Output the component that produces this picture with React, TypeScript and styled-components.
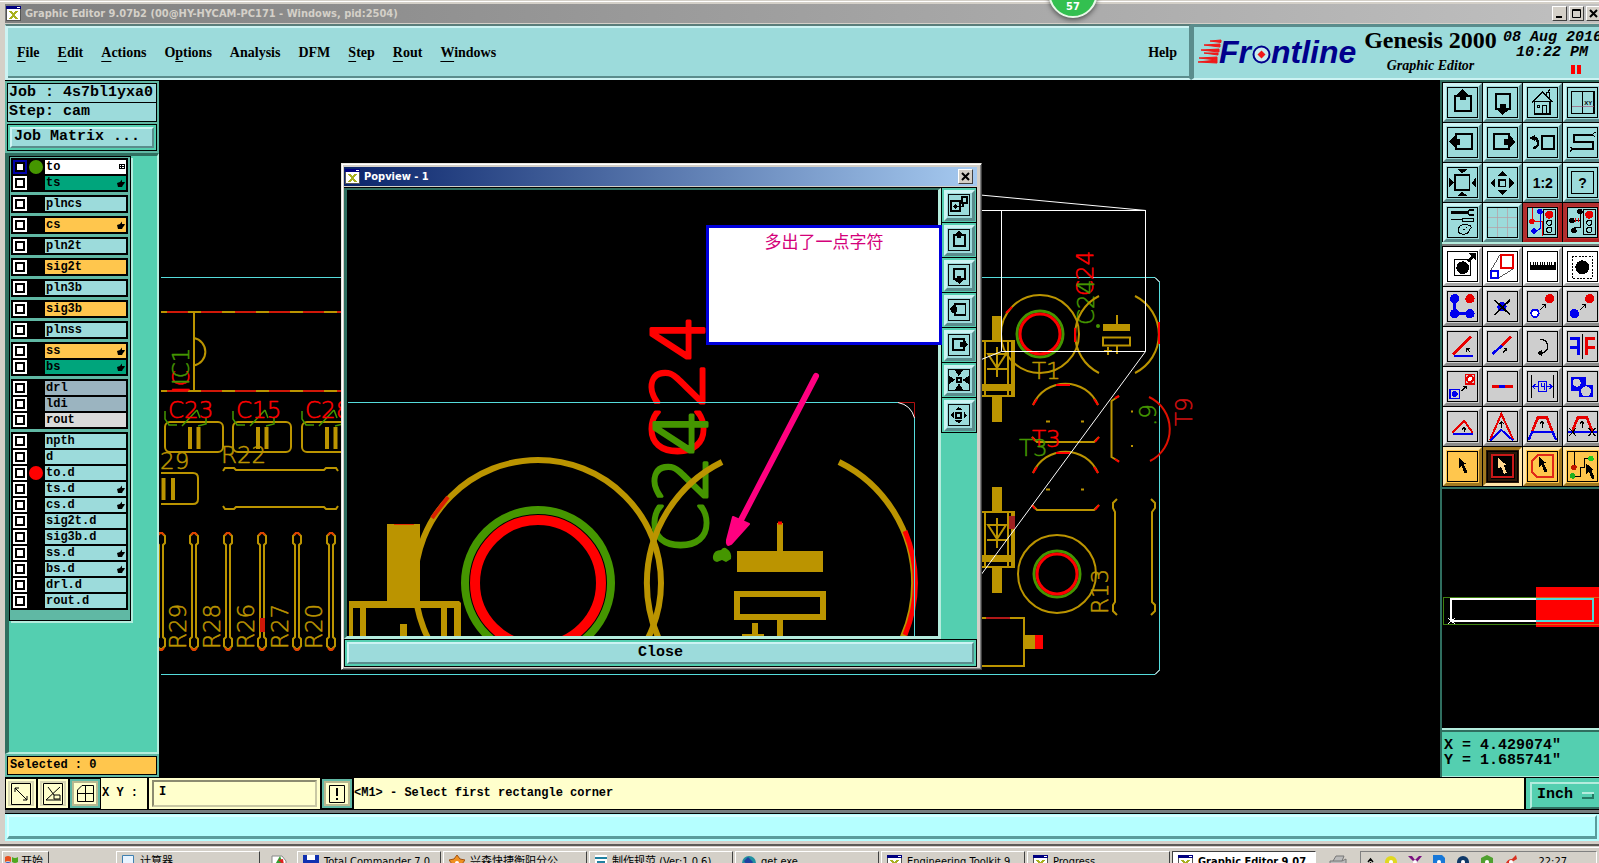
import React from 'react';
import styled, { createGlobalStyle, css } from 'styled-components';

const MONO = '"Liberation Mono", "Noto Sans CJK SC", monospace';
const SERIF = '"Liberation Serif", serif';
const SANS = '"DejaVu Sans Condensed", "Noto Sans CJK SC", sans-serif';

const C = {
  aqua: '#9cdbdb',
  aquaLight: '#cdf3f3',
  aquaDark: '#5a8c8c',
  teal: '#54cfb0',
  tealLight: '#b4ecdd',
  tealMid: '#60b8a4',
  tealDark: '#2f6e5f',
  chrome: '#d4d0c8',
  cream: '#ffffcc',
  amber: '#ffc64d',
  gold: '#bb9400',
  green: '#459600',
  red: '#ff0000',
  outline: '#55dcdc',
};

const GlobalStyle = createGlobalStyle`
  html, body { margin: 0; height: 100%; overflow: hidden; background: ${C.chrome}; }
  * { box-sizing: border-box; }
  button, input, select { font: inherit; color: inherit; margin: 0; padding: 0; border-radius: 0; }
  svg { display: block; }
`;

const Desktop = styled.div`
  position: relative;
  display: flex;
  flex-direction: column;
  height: 100vh;
  overflow: hidden;
  background: ${C.chrome};
  color: #000;
`;

const AppWindow = styled.div`
  display: flex;
  flex-direction: column;
  flex: none;
  padding: 4px 0 3px 5px;
  border-bottom: 2px solid #5c5a56;
  background: linear-gradient(#d4d0c8 0 1px, #fff 1px 2px, #d4d0c8 2px);
`;

const TitleBar = styled.header<{ $active?: boolean }>`
  display: flex;
  align-items: center;
  gap: 4px;
  flex: none;
  height: 20px;
  padding-left: 1px;
  border-bottom: 1px solid ${C.chrome};
  background: ${p => (p.$active ? 'linear-gradient(90deg, #0a246a, #a6caf0)' : 'linear-gradient(90deg, #808080, #c0c0c0)')};
  color: ${p => (p.$active ? '#fff' : '#d4d0c8')};
  font: bold 11px/18px ${SANS};
`;

const Title = styled.h1`
  flex: 1;
  margin: 0;
  font: inherit;
  white-space: nowrap;
`;

const Captions = styled.div`
  display: flex;
  gap: 2px;
  margin-right: -2px;
  margin-left: auto;
`;

const CaptionButton = styled.button`
  display: grid;
  place-items: center;
  width: 15px;
  height: 15px;
  border: 1px solid;
  border-color: #fff #404040 #404040 #fff;
  background: ${C.chrome};
`;

const Badge = styled.div`
  position: absolute;
  top: -31px;
  left: 67.1%;
  width: 49px;
  height: 49px;
  padding-top: 30px;
  transform: translateX(-50%);
  border: 2px solid #e8f8e8;
  border-radius: 50%;
  background: #33c050;
  box-shadow: 0 2px 5px rgba(0, 0, 0, 0.5);
  color: #fff;
  font: bold 11px/12px ${SANS};
  text-align: center;
`;

const TopRow = styled.div`
  display: flex;
  flex: none;
  height: 56px;
`;

const MenuBar = styled.nav`
  display: flex;
  align-items: center;
  gap: 18px;
  flex: 1;
  padding: 2px 12px 0 11px;
  border: solid;
  border-width: 2px 2px 2px 1px;
  border-color: #5a7d7a ${C.aquaDark} ${C.aquaLight} ${C.aquaLight};
  background: ${C.aqua};
  box-shadow: inset 2px 2px ${C.aquaLight}, inset 0 -2px ${C.aquaDark};
`;

const MenuItem = styled.button`
  border: 0;
  background: none;
  font: bold 14px/20px ${SERIF};
  u { text-underline-offset: 4px; text-decoration-thickness: 1px; }
  &:last-child { margin-left: auto; }
`;

const BrandPanel = styled.div`
  display: flex;
  gap: 5px;
  flex: 0 0 408px;
  overflow: hidden;
  padding-left: 3px;
  border: solid;
  border-width: 3px 0 2px 3px;
  border-color: ${C.aquaDark} ${C.aquaDark} ${C.aquaLight} ${C.aquaDark};
  background: ${C.aqua};
`;

const Product = styled.div`
  flex: none;
  width: 135px;
  text-align: center;
  font: bold 24px/27px ${SERIF};
  white-space: nowrap;
  em { display: block; font: italic bold 14px/24px ${SERIF}; }
`;

const Clock = styled.div`
  flex: none;
  width: 100px;
  padding-top: 3px;
  font: italic bold 15px/15px ${MONO};
  white-space: nowrap;
  span { display: block; padding-left: 13px; }
`;

const PauseMark = styled.i`
  display: block;
  width: 10px;
  height: 9px;
  margin: 5px 0 0 68px;
  background: linear-gradient(90deg, red 0 4px, transparent 4px 6px, red 6px);
`;

const Workspace = styled.main`
  position: relative;
  display: flex;
  flex: none;
  min-height: 697px;
  background: #000;
`;

const SidePanel = styled.aside`
  display: flex;
  flex-direction: column;
  flex: 0 0 154px;
  background: ${C.tealMid};
`;

const JobInfo = styled.section`
  padding: 2px 2px 2px;
  border-top: 1px solid #000;
  font: bold 15px/17px ${MONO};
  white-space: pre;
`;

const JobLine = styled.div`
  overflow: hidden;
  margin-bottom: -1px;
  padding: 0 1px;
  border: 1px solid #000;
  background: ${C.aqua};
  line-height: 18px;
`;

const MatrixFrame = styled.div`
  margin-top: 3px;
  padding: 2px;
  border: 1px solid #000;
  background: ${C.teal};
`;

const MatrixButton = styled.button`
  display: block;
  width: 100%;
  padding: 0 2px 1px;
  border: 2px solid;
  border-color: ${C.aquaLight} ${C.aquaDark} ${C.aquaDark} ${C.aquaLight};
  background: ${C.aqua};
  line-height: 16px;
  text-align: left;
`;

const LayerWell = styled.section`
  display: flex;
  flex: 1;
  align-items: flex-start;
  border: solid;
  border-width: 3px 2px 2px 4px;
  border-color: ${C.tealDark} ${C.tealLight} ${C.tealLight} ${C.tealDark};
  background: ${C.teal};
`;

const LayerList = styled.div`
  display: flex;
  flex-direction: column;
  gap: 3px;
  flex: none;
  width: 122px;
  padding: 1px 2px 10px 1px;
  border: 1px solid #000;
  background: ${C.tealMid};
  box-shadow: 2px 2px ${C.tealLight};
`;

const LayerGroup = styled.div`
  display: flex;
  flex-direction: column;
  gap: 2px;
  padding: 2px;
  background: #000;
`;

const LayerRow = styled.div`
  display: grid;
  grid-template-columns: 14px 18px 1fr;
  height: 14px;
`;

const LayerCheck = styled.input<{ $active?: boolean }>`
  appearance: none;
  width: 14px;
  height: 14px;
  border: 2px solid ${p => (p.$active ? '#0000a8' : '#fff')};
  background: #fff;
  box-shadow: inset 0 0 0 2px #000;
`;

const LayerDot = styled.span<{ $color?: string }>`
  width: 14px;
  height: 14px;
  margin-left: 2px;
  border-radius: 50%;
  background: ${p => p.$color ?? 'transparent'};
`;

const LayerName = styled.label<{ $bg: string }>`
  display: flex;
  align-items: center;
  justify-content: space-between;
  overflow: hidden;
  padding: 0 1px;
  background: ${p => p.$bg};
  font: bold 12px/14px ${MONO};
`;

const Selected = styled.div`
  margin: 2px;
  padding: 0 2px;
  border: 1px solid #000;
  background: ${C.amber};
  font: bold 12px/17px ${MONO};
`;

const BoardView = styled.section`
  flex: 1;
  min-width: 0;
  overflow: hidden;
`;

const ToolPanel = styled.aside`
  display: flex;
  flex-direction: column;
  flex: 0 0 159px;
  overflow: hidden;
  border-left: 2px solid ${C.tealDark};
`;

const ToolGrid = styled.div<{ $lower?: boolean }>`
  display: grid;
  grid-template-columns: repeat(4, 39px);
  gap: 1px;
  padding: ${p => (p.$lower ? '1px 1px 1px' : '1px 1px 0')};
  border-top: 2px solid ${p => (p.$lower ? '#777' : C.tealDark)};
  border-bottom: 2px solid ${p => (p.$lower ? C.tealDark : C.tealLight)};
  background: #000;
`;

type Tone = 'aqua' | 'red' | 'white' | 'gray' | 'amber' | 'amberOn';
const tones: Record<Tone, [string, string, string]> = {
  aqua: [C.aqua, C.aquaLight, C.aquaDark],
  red: [C.aqua, '#b03030', '#b02020'],
  white: ['#fff', '#fff', '#a8a8a8'],
  gray: ['#cecece', '#efefef', '#8a8a8a'],
  amber: [C.amber, '#ffe6a8', '#a07820'],
  amberOn: ['#2a1808', '#a07820', '#ffe6a8'],
};

const raised = css<{ $tone: Tone }>`
  border: 3px solid;
  border-color: ${p => tones[p.$tone][1]} ${p => tones[p.$tone][2]} ${p => tones[p.$tone][2]} ${p => tones[p.$tone][1]};
  background: ${p => tones[p.$tone][0]};
`;

const ToolButton = styled.button<{ $tone: Tone }>`
  display: grid;
  place-items: center;
  width: 39px;
  height: 39px;
  ${raised}
  ${p => p.$tone === 'red' && css`box-shadow: inset 0 0 0 1px #c03030;`}
`;

const MiniMap = styled.div`
  flex: 1;
  overflow: hidden;
  border-bottom: 2px solid ${C.tealLight};
`;

const Coordinates = styled.output`
  display: block;
  flex: none;
  padding: 6px 2px 8px;
  border-top: 2px solid ${C.tealDark};
  border-bottom: 1px solid ${C.tealLight};
  background: ${C.teal};
  font: bold 15px/15px ${MONO};
  white-space: pre;
`;

const Popup = styled.section`
  position: absolute;
  top: 83px;
  left: 336px;
  width: 641px;
  display: flex;
  flex-direction: column;
  padding: 3px 4px 2px 2px;
  border: 1px solid;
  border-color: #e8e6e0 #404040 #404040 #e8e6e0;
  background: ${C.chrome};
  box-shadow: inset 1px 1px #fff, inset -1px -1px #808080;
`;

const PopupBody = styled.div`
  display: flex;
  border-top: 1px solid #000;
  background: #000;
`;

const PopupView = styled.div`
  flex: 1;
  min-width: 0;
  overflow: hidden;
  border: solid;
  border-width: 2px 3px 3px 3px;
  border-color: ${C.tealDark} ${C.tealLight} ${C.tealLight} ${C.tealDark};
`;

const PopupTools = styled.div`
  display: flex;
  flex-direction: column;
  flex: 0 0 36px;
  gap: 1px;
  padding: 0 1px;
  background: linear-gradient(#000 0 245px, ${C.teal} 245px);
`;

const PopupToolCell = styled.div`
  display: grid;
  place-items: center;
  height: 34px;
  background: ${C.teal};
`;

const PopupTool = styled.button<{ $tone: Tone }>`
  display: grid;
  place-items: center;
  width: 31px;
  height: 31px;
  ${raised}
  svg g [fill='none'] { stroke-width: 8px; }
`;

const CloseFrame = styled.div`
  padding: 2px;
  border: 1px solid #000;
  background: ${C.teal};
`;

const CloseButton = styled.button`
  display: block;
  width: 100%;
  border: 2px solid;
  border-color: ${C.aquaLight} ${C.aquaDark} ${C.aquaDark} ${C.aquaLight};
  background: ${C.aqua};
  font: bold 15px/18px ${MONO};
`;

const Note = styled.div`
  position: absolute;
  top: 61px;
  left: 364px;
  width: 236px;
  height: 120px;
  padding-top: 3px;
  border: 3px solid #0000dc;
  background: #fff;
  color: #d4007a;
  font: 17px/20px "Noto Sans CJK SC", sans-serif;
  text-align: center;
`;

const PromptRow = styled.div`
  display: flex;
  flex: none;
  height: 33px;
  border-top: 1px solid #000;
  border-bottom: 1px solid #000;
  background: ${C.cream};
  font: bold 12px/30px ${MONO};
`;

const SnapButton = styled.button<{ $on?: boolean }>`
  display: grid;
  place-items: center;
  flex: none;
  width: 32px;
  border: 3px solid ${p => (p.$on ? C.tealMid : C.cream)};
  outline: 1px solid #000;
  outline-offset: -1px;
  background: ${C.cream};
  box-shadow: inset 0 0 0 2px ${p => (p.$on ? '#b9b890' : '#d8d7b4')};
`;

const XyLabel = styled.label`
  flex: none;
  width: 46px;
  padding-left: 1px;
  white-space: pre;
`;

const XyField = styled.div`
  display: flex;
  flex: none;
  width: 174px;
  padding: 2px 3px;
  border: solid #000;
  border-width: 0 1px 0 2px;
`;

const XyInput = styled.input`
  flex: 1;
  min-width: 0;
  padding: 0 5px 4px;
  border: 2px solid;
  border-color: #8c8b70 #c9c8a4 #c9c8a4 #8c8b70;
  background: ${C.cream};
`;

const Prompt = styled.div`
  flex: 1;
  border-left: 1px solid #000;
  white-space: nowrap;
`;

const UnitFrame = styled.div`
  flex: 0 0 75px;
  overflow: hidden;
  padding: 2px 0 2px 4px;
  border-left: 2px solid #000;
  background: ${C.teal};
`;

const UnitSelect = styled.select`
  appearance: none;
  width: 72px;
  height: 27px;
  padding-left: 5px;
  border: 2px solid;
  border-color: ${C.tealLight} ${C.tealDark} ${C.tealDark} ${C.tealLight};
  background: linear-gradient(#267a64, #267a64) 50px 13px / 12px 2px no-repeat,
    linear-gradient(${C.tealLight}, ${C.tealLight}) 50px 8px / 12px 2px no-repeat,
    linear-gradient(#267a64, #267a64) 60px 8px / 2px 7px no-repeat,
    ${C.teal};
  font: bold 15px/22px ${MONO};
`;

const StatusLine = styled.div`
  flex: none;
  height: 31px;
  padding: 2px;
  border-top: 3px solid #777f80;
  background: #b5ffff;
  box-shadow: inset 0 1px #000;
  div {
    height: 24px;
    border: solid;
    border-width: 2px 2px 3px;
    border-color: #d8ffff #5a9c9c #5a9c9c #d8ffff;
  }
`;

const Taskbar = styled.footer`
  display: flex;
  flex: none;
  gap: 2px;
  height: 30px;
  padding: 5px 2px 0;
  background: linear-gradient(${C.chrome} 0 1px, #fff 1px 2px, ${C.chrome} 2px);
  font: 11px/20px ${SANS};
`;

const Task = styled.button<{ $w: number; $on?: boolean }>`
  display: flex;
  align-items: center;
  gap: 5px;
  flex: 0 0 ${p => p.$w}px;
  overflow: hidden;
  height: 22px;
  padding: 0 5px;
  border: 1px solid;
  border-color: ${p => (p.$on ? '#404040 #fff #fff #404040' : '#fff #404040 #404040 #fff')};
  background: ${p => (p.$on ? '#fff' : C.chrome)};
  font-weight: ${p => (p.$on ? 'bold' : 'normal')};
  white-space: nowrap;
  svg { flex: none; }
`;

const StartButton = styled(Task)`
  gap: 2px;
  padding: 0 2px;
`;

const TaskGap = styled.span<{ $w: number }>`
  display: grid;
  place-items: center;
  flex: 0 0 ${p => p.$w}px;
  height: 22px;
`;

const Tray = styled.div`
  display: flex;
  align-items: center;
  gap: 10px;
  flex: 1;
  height: 22px;
  padding: 0 29px 0 6px;
  border: 1px solid;
  border-color: #808080 #fff #fff #808080;
  time { margin-left: auto; }
`;

/* ---------- icons ---------- */

const XWindowIcon = ({ size = 15 }: { size?: number }) => (
  <svg width={size} height={size} viewBox="0 0 15 15" shapeRendering="crispEdges">
    <rect width="15" height="15" fill="#fff" />
    <rect width="15" height="3" fill="#000080" />
    <rect x="11" y="1" width="3" height="1" fill="#fff" />
    <path d="M4 5l7 8M11 5l-7 8" stroke="#a8b020" strokeWidth="2" />
    <path d="M0 3V14.5H14.5V3" stroke="#555" fill="none" />
  </svg>
);

const Hand = () => (
  <svg width="8" height="8" viewBox="0 0 8 8"><path d="M0 4l3-1 2-2.500v2.500h3L7 5 6 6 5 8H1z" /></svg>
);
const GridMark = () => (
  <svg width="6" height="6" viewBox="0 0 6 6" shapeRendering="crispEdges"><path d="M0 .5h6M0 2.5h6M0 4.5h6M.5 0v5M2.5 0v5M5.5 0v5" stroke="#000" /></svg>
);

const k = '#000', b = '#0000ee', r = '#e80000';
const box = (x: number, y: number, w: number, h: number, s = 5, c = k) => (
  <rect x={x} y={y} width={w} height={h} fill="none" stroke={c} strokeWidth={s} />
);
const ln = (d: string, c = k, s = 3) => <path d={d} fill="none" stroke={c} strokeWidth={s} />;
const dot = (x: number, y: number, rad: number, c = k) => <circle cx={x} cy={y} r={rad} fill={c} />;
const smallArrow = (x: number, y: number) => ln(`M${x} ${y + 16}l16-16M${x + 6} ${y}h10v10`);
const pointer = (x: number, y: number, c = k) => (
  <path transform={`translate(${x} ${y})`} d="M0 0L24 20H16L26 44L18 48L9 26L0 32Z" fill={c} />
);
const glyph = (x: number, y: number, size: number, t: string) => (
  <text x={x} y={y} fontSize={size} fontWeight="bold" fontFamily="Liberation Sans, sans-serif">{t}</text>
);

const icons: Record<string, React.ReactNode> = {
  panUp: <>{box(24, 26, 46, 44, 6)}<path d="M46 6l17 15v7h-8v11H37V28h-8v-7z" /></>,
  panDown: <>{box(25, 20, 44, 44, 6)}<path d="M46 83l17-15v-7h-8V51H37v10h-8v7z" /></>,
  home: <>{ln('M14 45L46 14L76 45', k, 4)}{box(22, 43, 46, 37, 4)}{box(29, 53, 8, 8, 3)}{box(44, 54, 12, 25, 3)}{ln('M57 24V14h8V34M62 12l6-6')}</>,
  overview: <>{box(12, 13, 68, 66, 4)}{ln('M46 13V79')}{ln('M13 58H79', '#a05070', 2)}{glyph(51, 54, 18, 'XY')}</>,
  panLeft: <>{box(27, 20, 46, 46, 6)}<path d="M6 43l15-17h7v8h11v18H28v8h-7z" /></>,
  panRight: <>{box(19, 20, 46, 46, 6)}<path d="M84 43L69 26h-7v8H50v18h12v8h7z" /></>,
  previous: <>{box(44, 26, 35, 38, 6)}{ln('M14 32h10q8 4 8 16t-14 14', k, 7)}<path d="M7 32l16-10v20z" /></>,
  zigzag: <>{ln('M74 23H20V43H76V65H16', k, 6)}{ln('M84 14l-10 9 10 6M7 58l9 7-9 8')}</>,
  zoomIn: <>{box(23, 23, 44, 46)}<path d="M45 18L29 5h32zM45 73L29 87h32zM19 46L4 30v32zM73 46l14-16v32z" /></>,
  zoomOut: <>{box(34, 37, 21, 21)}<path d="M45 12l16 14H29zM45 82l16-14H29zM10 47l14-15v30zM80 47L66 32v30z" /></>,
  shrink: <>{box(36, 36, 18, 18)}<path d="M45 30L28 5h34zM45 60L28 86h34zM30 45L5 28v34zM60 45l26-17v34z" /></>,
  scale: glyph(16, 61, 42, '1:2'),
  help: <>{box(12, 13, 67, 65, 4)}{glyph(33, 61, 42, '?')}</>,
  setup: <>{ln('M10 15H60', k, 8)}{ln('M80 8H66l-6 7 6 7H80', k, 5)}{ln('M12 36H46', k, 3)}{box(46, 32, 32, 9, 3)}{ln('M34 62Q42 48 60 52T68 66Q60 84 44 80T34 62M46 66l6 2M56 60l4 2')}</>,
  grid: ln('M29 2V88M61 2V88M2 31H88M2 61H88', '#b89aa0', 2),
  netOn: <>{ln('M14 2V42H44V85', r)}{ln('M38 15V64l-16 12', b)}{dot(38, 13, 8, b)}{dot(14, 42, 8, r)}{dot(20, 71, 8, b)}{box(48, 6, 36, 76, 4)}{dot(66, 22, 12, r)}{ln('M58 46a8 8 0 1 0 16 0a8 8 0 1 0-16 0M58 68a8 8 0 1 0 16 0a8 8 0 1 0-16 0')}</>,
  netOff: <>{ln('M38 15V40H14M38 40V60H20')}{ln('M24 32v12M32 32v12', r)}{dot(38, 13, 8)}{dot(14, 40, 8)}{dot(20, 70, 8)}{box(48, 6, 36, 76, 4)}{dot(66, 22, 12, r)}{ln('M58 46a8 8 0 1 0 16 0a8 8 0 1 0-16 0M58 68a8 8 0 1 0 16 0a8 8 0 1 0-16 0')}</>,
  padSelect: <>{box(22, 25, 46, 46, 3)}{dot(46, 49, 19)}{ln('M62 30L76 16', k, 8)}<path d="M64 6h22v22z" /></>,
  padScale: <>{box(40, 12, 38, 38, 6, r)}{box(10, 60, 22, 20, 6, b)}{ln('M10 58L38 10M34 80L78 52', k, 2)}</>,
  ruler: <>{ln('M9 48H85', k, 17)}{ln('M10 33v10M17 33v10M24 33v10M31 33v10M38 33v10M45 33v10M52 33v10M59 33v10M66 33v10M73 33v10M80 33v10M84 33v10')}</>,
  selectArea: <>{dot(45, 48, 21)}<rect x="14" y="14" width="62" height="66" fill="none" stroke={k} strokeWidth="3" strokeDasharray="6 4" /></>,
  chain: <>{ln('M22 22V67H68', b, 10)}{dot(22, 22, 14, b)}{dot(68, 22, 14, r)}{dot(22, 67, 14, b)}{dot(68, 67, 14, b)}</>,
  delete: <>{dot(44, 46, 14, b)}{ln('M22 26L68 70M68 26L22 70', k, 5)}</>,
  copyPad: <>{dot(67, 22, 14, r)}<circle cx="23" cy="66" r="11" fill="#fff" stroke={b} strokeWidth="6" />{smallArrow(38, 40)}</>,
  movePad: <>{dot(67, 22, 14, r)}{dot(21, 67, 14, b)}{smallArrow(38, 40)}</>,
  angle: <>{ln('M16 70L70 16', r, 8)}{ln('M20 74H76', b, 7)}{ln('M58 50l10 12M58 62V50h10')}</>,
  lineSplit: <>{ln('M44 42L70 16', r, 8)}{ln('M16 68L44 42', b, 8)}{ln('M46 64l12-12M50 52h8v8')}</>,
  rotate: <>{ln('M38 24Q62 26 61 46T36 66', k, 4)}<path d="M30 65l14-10v20z" /></>,
  mirror: <>{ln('M45 8V82')}{ln('M8 22H34V72M8 48H34', b, 8)}{ln('M82 22H58V72M82 48H58', r, 8)}</>,
  copyLayer: <>{box(54, 9, 28, 28, 5, r)}<circle cx="68" cy="23" r="9" fill="#fff" stroke={r} strokeWidth="6" />{box(8, 54, 28, 28, 4, b)}{dot(22, 68, 9, b)}{smallArrow(42, 44)}</>,
  segment: <>{ln('M14 44H76', r, 9)}{ln('M36 44H54', b, 9)}</>,
  spacing: <>{ln('M12 12V80M78 12V80')}{ln('M16 46H34M56 46H74M24 38l-8 8 8 8M66 38l8 8-8 8M43 36v10h10M51 36v20', b)}{box(34, 30, 22, 30, 3, b)}</>,
  merge: <><path d="M12 18H56V40H78V78H36V60H12z" fill={b} />{dot(28, 34, 12, '#cecece')}{dot(56, 60, 15, '#cecece')}</>,
  triangle: <>{ln('M14 64L50 28L76 64', r, 6)}{ln('M18 68H76', b, 7)}{ln('M50 62V48M44 54l6-6 6 6')}</>,
  peak: <>{ln('M8 86L42 8L78 86', r, 6)}{ln('M8 88L42 56L78 88', b, 6)}{ln('M43 50V30M37 38l6-8 6 8')}</>,
  trapezoid: <>{ln('M14 62L32 18H58L76 62', r, 8)}{ln('M4 86L14 62H76L86 86', b, 7)}{ln('M44 50V30M38 38l6-8 6 8')}</>,
  trapezoidCut: <>{ln('M14 62L32 18H58L76 62', r, 8)}{ln('M2 62H88', b, 7)}{ln('M6 50l20 24M26 50L6 74M64 50l20 24M84 50L64 74')}{ln('M44 50V30M38 38l6-8 6 8')}</>,
  pick: pointer(34, 19),
  pickBox: <><rect x="10" y="8" width="72" height="74" fill="#000" />{box(14, 12, 64, 66, 6, '#c81818')}{pointer(32, 20, '#ffd890')}</>,
  pickPoly: <>{ln('M30 12H76V78H30L14 62V30Z', '#e02818', 6)}{pointer(34, 16)}</>,
  pickNet: <>{ln('M20 2V46M20 74H40V48H52V22H70')}{dot(20, 48, 8, '#c01800')}{dot(16, 74, 8, '#20b020')}{dot(71, 22, 8, '#20d020')}{pointer(56, 36)}</>,
  popout: <>{box(12, 30, 36, 42)}{box(60, 12, 18, 24, 4)}{ln('M26 52H62V36M34 44l-8 8 8 8')}</>,
};

const Icon = ({ name, size = 31 }: { name: string; size?: number }) => (
  <svg width={size} height={size} viewBox="-1 -1 93 93" shapeRendering="crispEdges" aria-hidden>
    <g>{icons[name]}</g>
    <rect x="0.5" y="0.5" width="90" height="90" fill="none" stroke="#000" strokeWidth={size > 25 ? 3 : 4} />
  </svg>
);

const upperTools: [string, Tone][] = [
  ['panUp', 'aqua'], ['panDown', 'aqua'], ['home', 'aqua'], ['overview', 'aqua'],
  ['panLeft', 'aqua'], ['panRight', 'aqua'], ['previous', 'aqua'], ['zigzag', 'aqua'],
  ['zoomIn', 'aqua'], ['zoomOut', 'aqua'], ['scale', 'aqua'], ['help', 'aqua'],
  ['setup', 'aqua'], ['grid', 'aqua'], ['netOn', 'red'], ['netOff', 'red'],
];
const lowerTools: [string, Tone][] = [
  ['padSelect', 'white'], ['padScale', 'white'], ['ruler', 'white'], ['selectArea', 'white'],
  ['chain', 'gray'], ['delete', 'gray'], ['copyPad', 'gray'], ['movePad', 'gray'],
  ['angle', 'gray'], ['lineSplit', 'gray'], ['rotate', 'gray'], ['mirror', 'gray'],
  ['copyLayer', 'gray'], ['segment', 'gray'], ['spacing', 'gray'], ['merge', 'gray'],
  ['triangle', 'gray'], ['peak', 'gray'], ['trapezoid', 'gray'], ['trapezoidCut', 'gray'],
  ['pick', 'amber'], ['pickBox', 'amberOn'], ['pickPoly', 'amber'], ['pickNet', 'amber'],
];
const popupTools = ['popout', 'panUp', 'panDown', 'panLeft', 'panRight', 'shrink', 'zoomOut'];

/* ---------- drawings ---------- */

const Label = ({ x, y, c, children, up, size = 23 }: { x: number; y: number; c: string; children: string; up?: boolean; size?: number }) => (
  <text
    transform={`translate(${x} ${y})${up ? ' rotate(-90)' : ''}`}
    fill={c}
    stroke={c}
    strokeWidth={size > 40 ? 3 : 0.5}
    strokeLinejoin="round"
    fontSize={size}
    fontWeight="200"
    fontFamily="DejaVu Sans Light, DejaVu Sans, sans-serif"
  >
    {children}
  </text>
);

const Hole = ({ x, y }: { x: number; y: number }) => (
  <g fill="none">
    <circle cx={x} cy={y} r="39" stroke={C.gold} strokeWidth="2" />
    <circle cx={x} cy={y} r="23" stroke={C.green} strokeWidth="3" />
    <circle cx={x} cy={y} r="20" stroke={C.red} strokeWidth="3" />
  </g>
);

const Diode = ({ y }: { y: number }) => (
  <g transform={`translate(0 ${y})`} stroke={C.gold} fill="none" strokeWidth="2">
    <path d="M997 0V24M997 80v26" strokeWidth="10" />
    <path d="M975 25H1014V80H975M985 25V80M1008 25V80M1012 25V80M988 38H1006L997 52ZM987 53H1007M997 31V61" />
    <path d="M975 71.500H1014" strokeWidth="7" />
  </g>
);

const Transistor = ({ y }: { y: number }) => (
  <g transform={`translate(0 ${y})`} fill="none" strokeWidth="2">
    <path d="M1033 21A35.400 35.400 0 0 1 1098 21M1032 53L1037 58H1094L1099 53M1046 37.500h4M1081 37.500h3" stroke={C.gold} />
    <path d="M1033 21l4-6M1098 21l-4-6M1056 1h14M1032 53l3 4M1099 53l-4 5" stroke={C.red} />
  </g>
);

const SmallCap = ({ x }: { x: number }) => (
  <g transform={`translate(${x} 0)`} stroke={C.gold} fill="none">
    <rect x="165" y="422" width="58" height="30" rx="5" strokeWidth="2" />
    <path d="M190 427V449M198.500 427V449" strokeWidth="4" />
    <path d="M165 411V419L169 425H177M182 426L197 410M197 410L200 418M198 426L206 424V418" stroke={C.green} strokeWidth="1.500" />
  </g>
);

const Resistor = ({ x }: { x: number }) => (
  <g transform={`translate(${x} 0)`} stroke={C.gold} fill="none" strokeWidth="2">
    <path d="M-2 547V635M2 547V635M-2 547V545L-4 543V536L-1 533H1L4 536V543L2 545V547M-2 635V637L-4 639V646L-1 649H1L4 646V639L2 637V635" />
    <path d="M-3 535L-1 533H1L3 535M-3 648L-1 650H1L3 648" stroke="#e04000" />
  </g>
);

const Board = () => (
  <svg width="1281" height="697" viewBox="159 80 1281 697">
    <g fill="none" strokeWidth="2" stroke={C.gold} shapeRendering="crispEdges">
      <path d="M161 312H345M161 391H345M194 312V391" />
      <path d="M167 312H345M167 391H345" stroke="#d01808" strokeDasharray="21 13" />
    </g>
    <path d="M194 338A14 14 0 0 1 194 365.500" fill="none" stroke={C.gold} strokeWidth="2" />
    <Label x={189} y={393} c={C.red} up>IC</Label>
    <Label x={189} y={385} c={C.green} up>IC1</Label>
    {[['C23', 0], ['C15', 68], ['C28', 137]].map(([t, x]) => (
      <g key={t}>
        <SmallCap x={Number(x)} />
        <Label x={168 + Number(x)} y={418} c={C.red}>{String(t)}</Label>
      </g>
    ))}
    <Label x={221} y={463} c={C.gold}>R22</Label>
    <Label x={160} y={469} c={C.gold}>29</Label>
    <g fill="none" stroke={C.gold} strokeWidth="2">
      <path d="M161 473H193Q198 473 198 478V499Q198 504 193 504H161" />
      <path d="M163.500 478V500M173 478V500" strokeWidth="4" />
      <path d="M223 471L225 468H234L236 470H324L326 468H336L338 471M223 506L225 509H234L236 507H324L326 509H336L338 506" />
    </g>
    {[161, 194, 228, 262, 297, 331].map(x => <Resistor key={x} x={x} />)}
    <rect x="260" y="618" width="5" height="14" fill="#d01808" />
    {['R29', 'R28', 'R26', 'R27', 'R20'].map((t, i) => <Label key={t} x={186 + i * 34} y={649} c={C.gold} up>{t}</Label>)}

    <path d="M161 277.500H1155L1159.500 282V670L1155 674.500H161" fill="none" stroke={C.outline} strokeWidth="1" />
    <path d="M1155 277.500l4.500 4.500M1159.500 670l-4.500 4.500" stroke="#fff" strokeWidth="1" />

    <Label x={1032} y={379} c={C.gold}>T1</Label>
    <Hole x={1040} y={334} />
    <path d="M1006 313l6-6" stroke={C.red} strokeWidth="2" />
    <Label x={1093} y={296} c={C.red} up>C24</Label>
    <Label x={1094} y={325} c={C.green} up>C24</Label>
    <g fill="none" stroke={C.gold} strokeWidth="2">
      <path d="M1099 296A43 43 0 0 0 1099 373M1135 296A43 43 0 0 1 1135 373" />
      <path d="M1103 337.500H1130V345.500H1103ZM1117 315V324M1117 346V354M1104 351h8M1108 347v8" />
      <path d="M1103 327.500H1130" strokeWidth="7" />
      <path d="M1075 328v14M1159 322v22" stroke={C.red} />
    </g>
    <circle cx="1098" cy="326" r="2" fill={C.green} />
    <Diode y={316} />
    <Diode y={487} />
    <rect x="1009" y="516" width="6" height="13" fill="#a02020" />
    <Transistor y={384} />
    <Transistor y={452} />
    <Label x={1032} y={447} c={C.red}>T3</Label>
    <Label x={1019} y={456} c={C.green}>T3</Label>
    <g fill="none" strokeWidth="2">
      <path d="M1119 396L1111.500 401V457L1119 461.500M1131 411.500h2M1131 446h2" stroke={C.gold} />
      <path d="M1149 397A35.400 35.400 0 0 1 1150 461" stroke="#e01000" />
      <path d="M1115 398l4-2M1115 459l4 3" stroke={C.red} />
      <path d="M1117 499L1113 503V508L1115 512V602L1113 605V611L1117 615M1151 499L1155 503V508L1152 512V602L1155 605V611L1151 615" stroke={C.gold} />
    </g>
    <Label x={1156} y={426} c={C.green} up>.9</Label>
    <Label x={1192} y={426} c="#d01010" up>T9</Label>
    <Hole x={1057} y={574} />
    <Label x={1108} y={614} c={C.gold} up>R13</Label>
    <path d="M975 618H1024V666H975" fill="none" stroke={C.gold} strokeWidth="2" />
    <path d="M986 618h24" stroke="#b01818" strokeWidth="2" />
    <rect x="1025" y="635" width="11" height="14" fill={C.gold} />
    <rect x="1035" y="635" width="8" height="14" fill={C.red} />
    <path d="M975 194.500L1146 210.500H975M1001.500 210V351.500H1145.500V210M1145.500 351.500L975 583M1001.500 351.500L975 362" fill="none" stroke="#fff" strokeWidth="1" />
  </svg>
);

const PopupDrawing = () => (
  <svg width="593" height="446" viewBox="347 190 593 446">
    <g fill="none" strokeWidth="6" stroke={C.gold}>
      <circle cx="538" cy="583" r="123" />
      <path d="M432 518L448 497" stroke="#d82000" strokeWidth="4" />
    </g>
    <Label x={704} y={459} c={C.red} up size={73}>C24</Label>
    <Label x={707} y={553} c={C.green} up size={73}>C24</Label>
    <g fill="none" strokeWidth="6" stroke={C.gold}>
      <path d="M722 462A135 135 0 0 0 722 704M839 462A135 135 0 0 1 839 704" />
      <path d="M905 531A135 135 0 0 1 905 635" stroke={C.red} strokeWidth="5" />
      <path d="M780 523V552M780 619V637M755 623V637" />
      <rect x="737" y="594" width="86" height="23" />
      <path d="M742 635H764" strokeWidth="2" />
    </g>
    <path d="M778 523h4" stroke={C.red} strokeWidth="3" />
    <rect x="737" y="551" width="86" height="21" fill={C.gold} />
    <circle cx="538" cy="583" r="73" fill="none" stroke={C.green} strokeWidth="8" />
    <circle cx="538" cy="583" r="63" fill="none" stroke={C.red} strokeWidth="10" />
    <rect x="387" y="524" width="33" height="80" fill={C.gold} />
    <path d="M349 601H459L461 603V637H454V608H447V637H441V608H366V637H360V608H353V637H349ZM400 624h7v13h-7z" fill={C.gold} />
    <path d="M394 524.500h20" stroke="#e03000" />
    <path d="M713 556Q714 550 721 550Q724 546 727 549Q732 552 731 559L726 562L722 560L717 562Q712 561 713 556Z" fill={C.green} />
    <path d="M348 402.500H898M914.500 418V637" stroke={C.outline} fill="none" />
    <path d="M898 402.500H914.500V418" stroke="#b01010" fill="none" />
    <path d="M898 402.500Q911 405 914.500 418" stroke="#fff" fill="none" />
    <path d="M816 376L741 520" stroke="#ff0080" strokeWidth="6" strokeLinecap="round" />
    <path d="M733 517L749 524L731 544Q726 547 727 540Z" fill="#ff0080" stroke="#ff0080" strokeWidth="2" strokeLinejoin="round" />
  </svg>
);

const MapDrawing = () => (
  <svg width="157" height="238" viewBox="1442 489 157 238" shapeRendering="crispEdges">
    <rect x="1536" y="587" width="63" height="40" fill={C.red} />
    <path d="M1599 597H1443V624H1599" fill="none" stroke="#3e8010" />
    <path d="M1536 597h63M1536 624h63" stroke="#e06010" />
    <path d="M1536 599H1451V621H1536" fill="none" stroke="#fff" strokeWidth="2" />
    <path d="M1536 599H1593V621H1536" fill="none" stroke="#50d8d8" strokeWidth="2" />
    <path d="M1448 618l7 6M1455 618l-7 6" stroke="#fff" />
  </svg>
);

const LogoArt = styled.svg`
  flex: none;
`;

const Logo = () => (
  <LogoArt width="161" height="46" viewBox="1195 27 161 46" role="img" aria-label="Frontline">
    <path d="M1208 41L1219 40V42.500ZM1202 45L1218 44V47ZM1199 50L1217 49V52ZM1202 53L1216 53V55ZM1197 58L1215 57V60ZM1196 62L1215 60V63Z" fill="#f01818" stroke="#f01818" />
    <g fill="#00008c" fontFamily="Liberation Sans, sans-serif" fontSize="32" fontWeight="bold" fontStyle="italic">
      <text x="1217" y="63">Fr</text>
      <text x="1269" y="63">ntline</text>
    </g>
    <circle cx="1259.500" cy="54.500" r="8" fill="#c8ecec" stroke="#00008c" strokeWidth="2" />
    <path d="M1259.500 50.500L1263.500 54.500L1259.500 58.500L1255.500 54.500Z" fill="#f01818" />
  </LogoArt>
);

/* ---------- data ---------- */

type Layer = { name: string; bg?: string; dot?: string; mark?: 'hand' | 'grid'; active?: boolean };
const layerGroups: Layer[][] = [
  [{ name: 'to', bg: '#fff', dot: C.green, mark: 'grid', active: true }, { name: 'ts', bg: '#00a57c', mark: 'hand' }],
  [{ name: 'plncs' }],
  [{ name: 'cs', bg: C.amber, mark: 'hand' }],
  [{ name: 'pln2t' }],
  [{ name: 'sig2t', bg: C.amber }],
  [{ name: 'pln3b' }],
  [{ name: 'sig3b', bg: C.amber }],
  [{ name: 'plnss' }],
  [{ name: 'ss', bg: C.amber, mark: 'hand' }, { name: 'bs', bg: '#00a57c', mark: 'hand' }],
  [{ name: 'drl', bg: '#9bb4c0' }, { name: 'ldi', bg: '#9bb4c0' }, { name: 'rout', bg: '#dadada' }],
  [
    { name: 'npth' }, { name: 'd' }, { name: 'to.d', dot: C.red }, { name: 'ts.d', mark: 'hand' },
    { name: 'cs.d', mark: 'hand' }, { name: 'sig2t.d' }, { name: 'sig3b.d' }, { name: 'ss.d', mark: 'hand' },
    { name: 'bs.d', mark: 'hand' }, { name: 'drl.d' }, { name: 'rout.d' },
  ],
];

const menus: [string, string, string][] = [
  ['', 'F', 'ile'], ['', 'E', 'dit'], ['', 'A', 'ctions'], ['O', 'p', 'tions'], ['Analysis', '', ''],
  ['DFM', '', ''], ['', 'S', 'tep'], ['', 'R', 'out'], ['', 'W', 'indows'], ['Help', '', ''],
];

const trayColors: [string, string][] = [
  ['#e0d820', 'M1 7a6 6 0 1 1 12 0a6 6 0 1 1-12 0'],
  ['#7a1080', 'M0 1h4l3 4 4-4h3L9 7v6H6V7z'],
  ['#1878d8', 'M1 0h9l3 3v10H1z'],
  ['#103868', 'M1 7a6 6 0 1 1 12 0a6 6 0 1 1-12 0'],
  ['#50a030', 'M1 3l6-3 6 3v6l-6 5-6-5z'],
  ['#d83020', 'M1 12Q2 4 8 4L12 0l1 4-5 3-3 7z'],
];

const CloseCross = () => (
  <svg width="11" height="11"><path d="M2 2l7 7M9 2l-7 7" stroke="#000" strokeWidth="2" /></svg>
);

export default function App() {
  return (
    <>
      <GlobalStyle />
      <Desktop>
        <AppWindow>
          <TitleBar>
            <XWindowIcon />
            <Title>Graphic Editor 9.07b2 (00@HY-HYCAM-PC171 - Windows, pid:2504)</Title>
            <Captions>
              <CaptionButton aria-label="Minimize"><svg width="11" height="11"><rect x="2" y="8" width="6" height="2" /></svg></CaptionButton>
              <CaptionButton aria-label="Maximize"><svg width="11" height="11"><path d="M1.500 1.500h8v8h-8zM1 2.500h9" fill="none" stroke="#000" /></svg></CaptionButton>
              <CaptionButton aria-label="Close"><CloseCross /></CaptionButton>
            </Captions>
          </TitleBar>

          <TopRow>
            <MenuBar>
              {menus.map(([pre, key, post]) => (
                <MenuItem key={pre + key + post}>{pre}<u>{key}</u>{post}</MenuItem>
              ))}
            </MenuBar>
            <BrandPanel>
              <Logo />
              <Product>Genesis 2000<em>Graphic Editor</em></Product>
              <Clock>08 Aug 2016<span>10:22 PM</span><PauseMark /></Clock>
            </BrandPanel>
          </TopRow>

          <Workspace>
            <SidePanel>
              <JobInfo>
                <JobLine>Job : 4s7bl1yxa0</JobLine>
                <JobLine>Step: cam</JobLine>
                <MatrixFrame><MatrixButton>Job Matrix ...</MatrixButton></MatrixFrame>
              </JobInfo>
              <LayerWell>
                <LayerList>
                  {layerGroups.map(group => (
                    <LayerGroup key={group[0].name}>
                      {group.map(l => (
                        <LayerRow key={l.name}>
                          <LayerCheck type="checkbox" id={`layer-${l.name}`} $active={l.active} />
                          <LayerDot $color={l.dot} />
                          <LayerName htmlFor={`layer-${l.name}`} $bg={l.bg ?? C.aqua}>
                            {l.name}
                            {l.mark === 'hand' && <Hand />}
                            {l.mark === 'grid' && <GridMark />}
                          </LayerName>
                        </LayerRow>
                      ))}
                    </LayerGroup>
                  ))}
                </LayerList>
              </LayerWell>
              <Selected>Selected : 0</Selected>
            </SidePanel>

            <BoardView><Board /></BoardView>

            <ToolPanel>
              <ToolGrid>
                {upperTools.map(([n, t]) => <ToolButton key={n} $tone={t} aria-label={n}><Icon name={n} /></ToolButton>)}
              </ToolGrid>
              <ToolGrid $lower>
                {lowerTools.map(([n, t]) => <ToolButton key={n} $tone={t} aria-label={n}><Icon name={n} /></ToolButton>)}
              </ToolGrid>
              <MiniMap><MapDrawing /></MiniMap>
              <Coordinates>{'X = 4.429074"\nY = 1.685741"'}</Coordinates>
            </ToolPanel>

            <Popup>
              <TitleBar $active>
                <XWindowIcon />
                <Title as="h2">Popview - 1</Title>
                <CaptionButton aria-label="Close"><CloseCross /></CaptionButton>
                <span />
              </TitleBar>
              <PopupBody>
                <PopupView><PopupDrawing /></PopupView>
                <PopupTools>
                  {popupTools.map(n => (
                    <PopupToolCell key={n}>
                      <PopupTool $tone="aqua" aria-label={n}><Icon name={n} size={22} /></PopupTool>
                    </PopupToolCell>
                  ))}
                </PopupTools>
              </PopupBody>
              <CloseFrame><CloseButton>Close</CloseButton></CloseFrame>
              <Note>多出了一点字符</Note>
            </Popup>
          </Workspace>

          <PromptRow>
            <SnapButton aria-label="Snap off">
              <svg width="20" height="22" viewBox="0 0 20 22" fill="none" stroke="#000"><path d="M.5.500h19v21H.500zM4 5l12 12M4 9V5h4M12 17h4v-4" /></svg>
            </SnapButton>
            <SnapButton aria-label="Snap to angle">
              <svg width="20" height="22" viewBox="0 0 20 22" fill="none" stroke="#000"><path d="M.5.500h19v21H.500zM17 4L3 17H18M5 4l6 8M11 12h6v4h-6z" /></svg>
            </SnapButton>
            <SnapButton $on aria-label="Snap to grid">
              <svg width="17" height="17" viewBox="0 0 17 17" fill="none" stroke="#000"><path d="M.5 5L5 .500H16.500V16.500H.500ZM8.500.500V16.500M.500 8.500H16.500" /></svg>
            </SnapButton>
            <XyLabel htmlFor="xy">X Y :</XyLabel>
            <XyField><XyInput id="xy" defaultValue="I" /></XyField>
            <SnapButton $on aria-label="Apply">
              <svg width="16" height="18" viewBox="0 0 16 18"><path d="M.5.500h15v17H.500z" fill="none" stroke="#000" /><path d="M8 3v8M8 13v2" stroke="#000" strokeWidth="2" /></svg>
            </SnapButton>
            <Prompt>&lt;M1&gt; - Select first rectangle corner</Prompt>
            <UnitFrame>
              <UnitSelect aria-label="Units" defaultValue="Inch"><option>Inch</option><option>mm</option></UnitSelect>
            </UnitFrame>
          </PromptRow>
          <StatusLine><div /></StatusLine>
        </AppWindow>

        <Taskbar>
          <StartButton $w={47}>
            <svg width="14" height="14"><path d="M0 2q3-2 6 0v5q-3-2-6 0z" fill="#e85020" /><path d="M7 2q3 2 6 0v5q-3 2-6 0z" fill="#50a820" /><path d="M0 8q3-2 6 0v5q-3-2-6 0z" fill="#2860d0" /><path d="M7 8q3 2 6 0v5q-3 2-6 0z" fill="#f0c020" /></svg>
            开始
          </StartButton>
          <TaskGap $w={63} />
          <Task $w={144}><svg width="13" height="14"><path d="M.5.500h11v13H.500z" fill="#e8f4ff" stroke="#4080b0" /></svg>计算器</Task>
          <TaskGap $w={33}><svg width="16" height="14"><path d="M1 1h10l4 5v8H1z" fill="#fff" stroke="#888" /><path d="M2 13l7-12 5 12z" fill="#30a030" /><path d="M7 5l5-1 1 6z" fill="#e02020" /></svg></TaskGap>
          <Task $w={144}><svg width="16" height="14"><path d="M0 0h16v14H0z" fill="#1030b0" /><path d="M4 0h8v5H4z" fill="#fff" /></svg>Total Commander 7.0</Task>
          <Task $w={144}><svg width="16" height="15"><path d="M8 0l3 4 5 1-3 4v5H3V9L0 5l5-1z" fill="#f09020" stroke="#a05010" /><circle cx="8" cy="8" r="2" fill="#fff" /></svg>兴森快捷衡阳分公</Task>
          <Task $w={144}><svg width="12" height="14"><path d="M0 0h12v14H0z" fill="#fff" /><path d="M0 3h12M2 7h8M2 10h8" stroke="#2080a0" strokeWidth="2" /></svg>制作规范 (Ver:1.0.6)</Task>
          <Task $w={144}><svg width="15" height="15"><circle cx="8" cy="8" r="7" fill="#2090a0" /><path d="M3 6l4-4 5 5-4 6z" fill="#2040a0" /></svg>get.exe</Task>
          <Task $w={144}><XWindowIcon />Engineering Toolkit 9</Task>
          <Task $w={143}><XWindowIcon />Progress</Task>
          <Task $w={144} $on><XWindowIcon />Graphic Editor 9.07</Task>
          <TaskGap $w={40}><svg width="18" height="14"><path d="M1 6h12l4-2v6H1zM4 6l3-5h8l-2 5" fill="#bbb" stroke="#777" /></svg></TaskGap>
          <Tray>
            <svg width="7" height="10"><path d="M1 5l2.500-3L6 5M1 9l2.500-3L6 9" fill="none" stroke="#000" strokeWidth="1.500" /></svg>
            {trayColors.map(([c, d]) => <svg key={c} width="14" height="14"><path d={d} fill={c} /><circle cx="7" cy="7" r="2" fill="#fff" /></svg>)}
            <time>22:27</time>
          </Tray>
        </Taskbar>
        <Badge>57</Badge>
      </Desktop>
    </>
  );
}
